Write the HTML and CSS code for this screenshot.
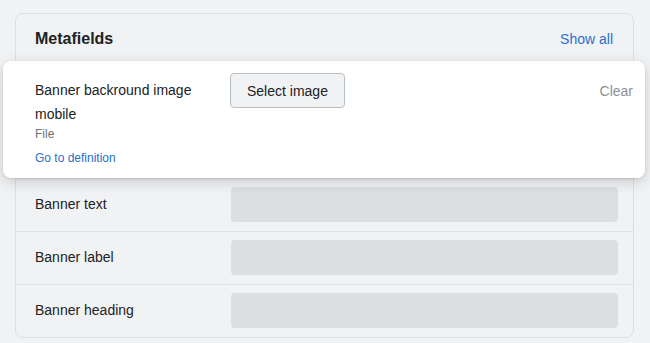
FILE: index.html
```html
<!DOCTYPE html>
<html lang="en">
<head>
    <meta charset="UTF-8">
    <meta name="viewport" content="width=device-width, initial-scale=1.0">
    <title>Metafields</title>
    <link rel="stylesheet" href="styles.css">
</head>
<body>
    <div class="card">
        <div class="card-header">
            <h2 class="card-title">Metafields</h2>
            <a class="link" href="#">Show all</a>
        </div>

        <!-- row being dragged -->
        <div class="row row-dragging">
            <div class="label">
                <p class="label-name">Banner backround image mobile</p>
                <p class="label-type">File</p>
                <a class="link link-small" href="#">Go to definition</a>
            </div>
            <div class="value">
                <button class="btn">Select image</button>
            </div>
            <button class="clear">Clear</button>
        </div>

        <div class="row">
            <div class="label">Banner text</div>
            <div class="value"><div class="field"></div></div>
        </div>
        <div class="row">
            <div class="label">Banner label</div>
            <div class="value"><div class="field"></div></div>
        </div>
        <div class="row">
            <div class="label">Banner heading</div>
            <div class="value"><div class="field"></div></div>
        </div>
    </div>
</body>
</html>
```

FILE: styles.css
```css
* {
    margin: 0;
    padding: 0;
    box-sizing: border-box;
}

body {
    background-color: #f1f2f4;
    color: #202223;
    font-family: 'Liberation Sans', Arial, sans-serif;
    font-size: 14px;
    padding: 13px 16px 0 15px;
}

.card {
    border: 1px solid #dcdee1;
    border-radius: 8px;
    background-color: #f1f2f4;
}

.card-header {
    display: flex;
    justify-content: space-between;
    align-items: center;
    padding: 15px 20px 12px 19px;
    line-height: 20px;
}

.card-title {
    font-size: 16px;
    font-weight: bold;
}

.link {
    color: #2c6ecb;
    text-decoration: none;
}

.link-small {
    display: block;
    font-size: 12px;
    line-height: 16px;
    margin-top: 8px;
}

.row {
    display: flex;
    align-items: flex-start;
    border-top: 1px solid #dfe1e4;
    padding: 8px 15px 9px 19px;
}

.row .label {
    width: 196px;
    flex-shrink: 0;
    line-height: 35px;
}

.value {
    flex: 1;
}

.field {
    height: 35px;
    background-color: #dcdee2;
    border-radius: 4px;
}

.row-dragging {
    background-color: #fff;
    border-top: none;
    border-radius: 8px;
    margin: 0 -12px 0 -13px;
    padding: 12px 12px 12px 32px;
    box-shadow: 0 4px 14px rgba(0, 0, 0, 0.16), 0 1px 3px rgba(0, 0, 0, 0.08);
    position: relative;
}

.row-dragging .label {
    width: 195px;
    line-height: 24px;
    padding-top: 5px;
}

.label-name {
    line-height: 24px;
    padding-right: 20px;
}

.label-type {
    color: #6d7175;
    font-size: 12px;
    line-height: 16px;
}

.btn {
    font-family: inherit;
    font-size: 14px;
    color: #202223;
    background-color: #f1f2f4;
    border: 1px solid #babfc3;
    border-radius: 4px;
    height: 35px;
    padding: 0 16px;
    cursor: pointer;
}

.clear {
    font-family: inherit;
    font-size: 14px;
    color: #8c9196;
    background: none;
    border: none;
    line-height: 24px;
    margin-top: 6px;
    cursor: pointer;
}
```
